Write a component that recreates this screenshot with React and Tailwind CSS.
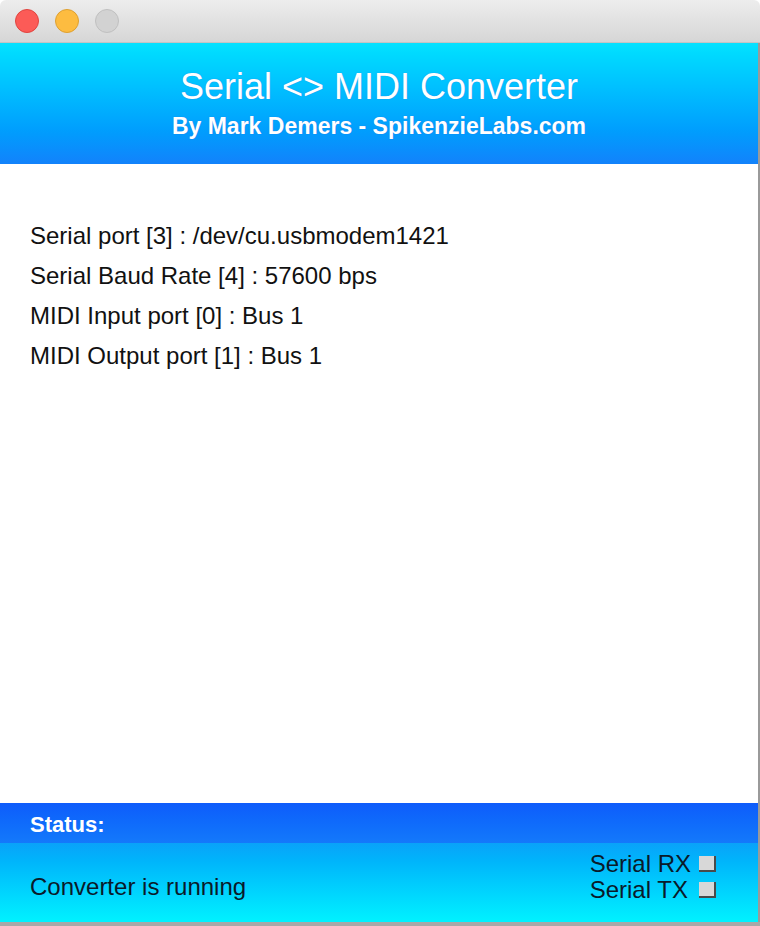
import React from 'react';

const rows = [
  'Serial port [3] : /dev/cu.usbmodem1421',
  'Serial Baud Rate [4] : 57600 bps',
  'MIDI Input port [0] : Bus 1',
  'MIDI Output port [1] : Bus 1',
];

function Light({ className }) {
  return <span className={`block w-[24px] h-[24px] rounded-full border ${className}`} />;
}

function Box() {
  return <span className="block w-[17px] h-[16px] bg-[#d8d8d8] border-r-2 border-b-2 border-[#4a4a4a]" />;
}

export default function App() {
  return (
    <div className="w-[760px] h-[926px] flex flex-col bg-white font-['Liberation_Sans',Arial,sans-serif] overflow-hidden">
      <div className="h-[43px] shrink-0 flex items-center gap-[16px] pl-[15px] bg-gradient-to-b from-[#ededed] to-[#d6d6d6] border-b border-[#c4c4c4] rounded-t-[6px]">
        <Light className="bg-[#fc5b57] border-[#e0443f]" />
        <Light className="bg-[#fdbc40] border-[#dea030]" />
        <Light className="bg-[#d2d2d2] border-[#c0c0c0]" />
      </div>

      <div className="h-[121px] shrink-0 flex flex-col items-center justify-center bg-gradient-to-b from-[#06e2ff] to-[#1282fb] text-white border-r-2 border-[#9a9a9a]">
        <div className="text-[36px] leading-[40px] mt-[-2px] [text-shadow:0_0_1px_rgba(80,80,200,0.6)]">Serial &lt;&gt; MIDI Converter</div>
        <div className="text-[23px] leading-[26px] font-bold mt-[6px] [text-shadow:0_0_1px_rgba(80,80,200,0.6)]">By Mark Demers - SpikenzieLabs.com</div>
      </div>

      <div className="flex-1 flex flex-col gap-[16px] pl-[30px] pt-[60px] text-[24px] leading-[24px] text-[#111] border-r-2 border-[#9a9a9a]">
        {rows.map((r) => (
          <div key={r}>{r}</div>
        ))}
      </div>

      <div className="h-[40px] shrink-0 flex items-center pl-[30px] pt-[2px] bg-gradient-to-b from-[#0f5cfb] to-[#1479fb] text-white font-bold text-[22px] border-r-2 border-[#9a9a9a]">
        Status:
      </div>
      <div className="h-[79px] shrink-0 flex items-start justify-between pl-[30px] pr-[42px] bg-gradient-to-b from-[#0aa2f9] to-[#00f2ff] text-[24px] leading-[26px] text-[#0a1a2a] border-r-2 border-[#9a9a9a]">
        <div className="mt-[31px]">Converter is running</div>
        <div className="grid grid-cols-[auto_auto] items-center gap-x-[8px] mt-[8px]">
          <div>Serial RX</div>
          <Box />
          <div>Serial TX</div>
          <Box />
        </div>
      </div>
      <div className="h-[4px] shrink-0 bg-[#a8a8a8]" />
    </div>
  );
}
